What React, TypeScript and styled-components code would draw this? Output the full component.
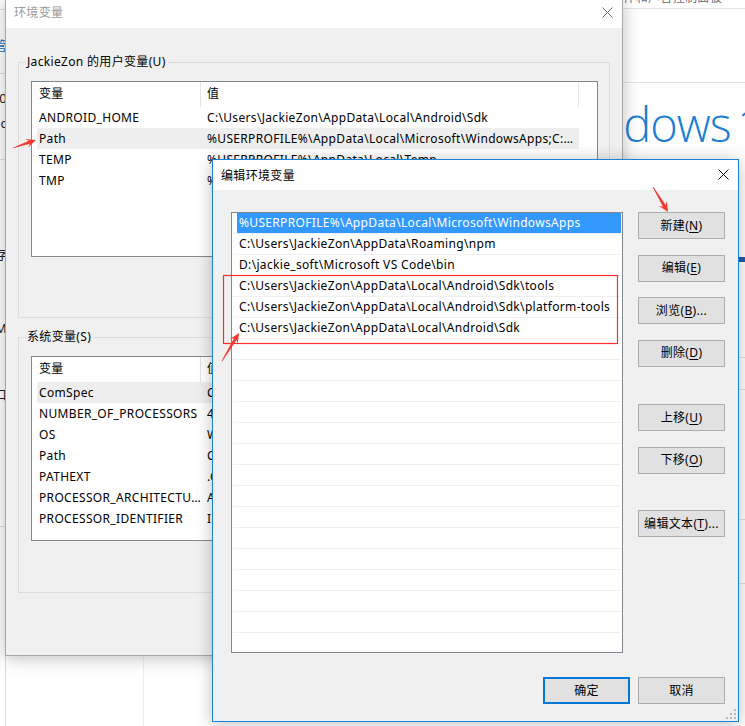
import React from "react";
import styled, { createGlobalStyle } from "styled-components";

const FONT = `"Noto Sans", "Noto Sans CJK SC", sans-serif`;

const GlobalStyle = createGlobalStyle`
  html, body { margin: 0; padding: 0; background: #ffffff; }
  body { overflow: hidden; font-family: ${FONT}; font-size: 12px; color: #000; letter-spacing: 0.33px; }
  * { box-sizing: border-box; }
`;

const Desktop = styled.div`
  position: relative;
  width: 745px;
  height: 726px;
  overflow: hidden;
  background: #ffffff;
`;

/* ---------- background control-panel window ---------- */
const BackWindow = styled.div`
  position: absolute;
  left: 540px;
  top: -16px;
  width: 260px;
  height: 760px;
  background: #ffffff;
  display: flex;
  flex-direction: column;
`;
const Crumb = styled.div`
  height: 25px;
  flex: none;
  padding: 6px 0 0 71px;
  line-height: 16px;
  color: #6d6d6d;
  border-bottom: 1px solid #e3e3e3;
  white-space: nowrap;
`;
const BackSection = styled.div`
  height: 74px;
  flex: none;
  border-bottom: 1px solid #e3e3e3;
`;
const Logo = styled.div`
  margin: 11px 0 0 6px;
  height: 60px;
  flex: none;
  font-family: "Open Sans", "Noto Sans", sans-serif;
  font-weight: 300;
  font-size: 47px;
  line-height: 60px;
  color: #1a7fd4;
  white-space: nowrap;
  letter-spacing: -1px;
  word-spacing: -5px;
`;
const BackRule = styled.div<{ $mt: number }>`
  margin-top: ${(p) => p.$mt}px;
  margin-left: 200px;
  height: 1px;
  flex: none;
  background: #dedede;
`;
const BackBlue = styled.div<{ $mt: number }>`
  margin-top: ${(p) => p.$mt}px;
  margin-left: 199px;
  width: 12px;
  height: 5px;
  flex: none;
  background: #1d5fa5;
`;

const BackNav = styled.div`
  position: absolute;
  left: -44px;
  top: 0;
  width: 50px;
  height: 726px;
  background: #ffffff;
  border-right: 1px solid #dcdcdc;
  display: flex;
  flex-direction: column;
  align-items: flex-end;
`;
const NavRule = styled.div<{ $mt: number }>`
  margin-top: ${(p) => p.$mt}px;
  width: 100%;
  height: 1px;
  flex: none;
  background: #e1e1e1;
`;
const NavGlyph = styled.div<{ $mt: number; $blue?: boolean }>`
  margin-top: ${(p) => p.$mt}px;
  margin-right: -2px;
  height: 16px;
  line-height: 16px;
  flex: none;
  font-size: 13px;
  color: ${(p) => (p.$blue ? "#1a6fc9" : "#222")};
`;
const BackBottom = styled.div`
  position: absolute;
  left: 0;
  top: 640px;
  width: 144px;
  height: 90px;
  border-right: 1px solid #efefef;
`;

/* ---------- windows ---------- */
const Win = styled.div<{
  $x: number;
  $y: number;
  $w: number;
  $h: number;
  $active?: boolean;
}>`
  position: absolute;
  left: ${(p) => p.$x}px;
  top: ${(p) => p.$y}px;
  width: ${(p) => p.$w}px;
  height: ${(p) => p.$h}px;
  display: flex;
  flex-direction: column;
  background: #f0f0f0;
  border: 1px solid ${(p) => (p.$active ? "#1883d7" : "#a8a8a8")};
  box-shadow: 0 2px 16px rgba(0, 0, 0, 0.26);
`;
const TitleBar = styled.div<{ $h: number }>`
  height: ${(p) => p.$h}px;
  flex: none;
  background: #ffffff;
  display: flex;
  align-items: flex-start;
  justify-content: space-between;
`;
const TitleText = styled.div<{ $active?: boolean; $pt: number }>`
  padding: ${(p) => p.$pt}px 0 0 8px;
  line-height: 17px;
  font-size: 12px;
  color: ${(p) => (p.$active ? "#000000" : "#9a9a9a")};
`;
const CloseBtn = styled.div<{ $h: number }>`
  width: 30px;
  height: ${(p) => p.$h}px;
  display: flex;
  align-items: center;
  justify-content: center;
`;

const CloseIcon = ({ color }: { color: string }) => (
  <svg width="11" height="11" viewBox="0 0 11 11">
    <path d="M0.5 0.5 L10.5 10.5 M10.5 0.5 L0.5 10.5" stroke={color} strokeWidth="1" />
  </svg>
);

/* ---------- env vars dialog ---------- */
const EnvBody = styled.div`
  flex: 1;
  display: flex;
  flex-direction: column;
  gap: 11px;
  padding: 26px 12px 0 12px;
`;
const Group = styled.fieldset`
  margin: 0;
  height: 264px;
  padding: 11px 11px 0 12px;
  border: 1px solid #dcdcdc;
  min-inline-size: 0;
`;
const GroupLabel = styled.legend`
  padding: 0 2px;
  margin-left: -6px;
  line-height: 16px;
  font-size: 12px;
  color: #000;
`;
const VarList = styled.div<{ $h: number }>`
  height: ${(p) => p.$h}px;
  background: #ffffff;
  border: 1px solid #828790;
  overflow: hidden;
  display: flex;
  flex-direction: column;
`;
const HeaderRow = styled.div`
  display: flex;
  height: 25px;
  flex: none;
`;
const HeaderCell = styled.div<{ $w: number; $pl: number }>`
  width: ${(p) => p.$w}px;
  flex: none;
  padding-left: ${(p) => p.$pl}px;
  line-height: 24px;
  border-right: 1px solid #e5e5e5;
  white-space: nowrap;
`;
const VarRow = styled.div<{ $sel?: boolean }>`
  display: flex;
  height: 21px;
  flex: none;
  width: 542px;
  margin-left: 5px;
  padding-left: 2px;
  line-height: 21px;
  background: ${(p) => (p.$sel ? "#eeeeee" : "transparent")};
  white-space: nowrap;
`;
const VarName = styled.div`
  width: 164px;
  margin-right: 4px;
  flex: none;
  overflow: hidden;
  text-overflow: ellipsis;
`;
const VarValue = styled.div`
  width: 369px;
  flex: none;
  overflow: hidden;
  text-overflow: ellipsis;
`;

/* ---------- edit dialog ---------- */
const EditBody = styled.div`
  flex: 1;
  display: flex;
  flex-direction: column;
  padding: 22px 13px 0 18px;
`;
const EditMain = styled.div`
  display: flex;
  gap: 15px;
  align-items: flex-start;
`;
const PathList = styled.div`
  width: 392px;
  height: 441px;
  flex: none;
  background: #ffffff;
  border: 1px solid #828790;
  overflow: hidden;
`;
const PathRow = styled.div<{ $sel?: boolean }>`
  height: 21px;
  margin: 0 1px;
  padding-left: 6px;
  line-height: 20px;
  white-space: nowrap;
  border-bottom: 1px solid #f0f0f0;
  color: ${(p) => (p.$sel ? "#ffffff" : "#000000")};
  background: ${(p) =>
    p.$sel ? "linear-gradient(to right, transparent 4px, #3399ff 4px)" : "transparent"};
`;
const BtnColumn = styled.div`
  display: flex;
  flex-direction: column;
  gap: 15.5px;
`;
const Btn = styled.button<{ $default?: boolean; $mt?: number }>`
  width: 87px;
  height: 27px;
  margin: ${(p) => p.$mt ?? 0}px 0 0 0;
  padding: 0;
  background: #e1e1e1;
  border: ${(p) => (p.$default ? "2px solid #0078d7" : "1px solid #adadad")};
  border-radius: 0;
  font-family: ${FONT};
  font-size: 12px;
  letter-spacing: 0.33px;
  line-height: 1;
  color: #000;
  u {
    text-decoration: underline;
    text-underline-offset: 2px;
  }
`;
const Footer = styled.div`
  display: flex;
  justify-content: flex-end;
  gap: 8px;
  margin-top: 24px;
`;
const Grip = styled.svg`
  position: absolute;
  right: 2px;
  bottom: 2px;
`;

/* ---------- annotations ---------- */
const Annotations = styled.svg`
  position: absolute;
  left: 0;
  top: 0;
  pointer-events: none;
`;

function arrowPoints(t: [number, number], h: [number, number]) {
  const dx = h[0] - t[0];
  const dy = h[1] - t[1];
  const L = Math.hypot(dx, dy);
  const ux = dx / L;
  const uy = dy / L;
  const px = -uy;
  const py = ux;
  const pt = (a: number, s: number) =>
    `${(t[0] + ux * a + px * s).toFixed(1)},${(t[1] + uy * a + py * s).toFixed(1)}`;
  return [
    pt(0, 0.3),
    pt(L - 7, 1.6),
    pt(L - 10, 4.6),
    pt(L, 0),
    pt(L - 10, -4.6),
    pt(L - 7, -1.6),
    pt(0, -0.3),
  ].join(" ");
}

const userVars = [
  { name: "ANDROID_HOME", value: "C:\\Users\\JackieZon\\AppData\\Local\\Android\\Sdk" },
  {
    name: "Path",
    value:
      "%USERPROFILE%\\AppData\\Local\\Microsoft\\WindowsApps;C:\\Users\\JackieZon\\AppData\\Roaming\\npm",
    sel: true,
  },
  { name: "TEMP", value: "%USERPROFILE%\\AppData\\Local\\Temp" },
  { name: "TMP", value: "%USERPROFILE%\\AppData\\Local\\Temp" },
];

const sysVars = [
  { name: "ComSpec", value: "C:\\WINDOWS\\system32\\cmd.exe", sel: true },
  { name: "NUMBER_OF_PROCESSORS", value: "4" },
  { name: "OS", value: "Windows_NT" },
  { name: "Path", value: "C:\\ProgramData\\Oracle\\Java\\javapath;C:\\WINDOWS\\system32" },
  { name: "PATHEXT", value: ".COM;.EXE;.BAT;.CMD;.VBS;.VBE;.JS;.JSE;.WSF;.WSH;.MSC" },
  { name: "PROCESSOR_ARCHITECTURE", value: "AMD64" },
  { name: "PROCESSOR_IDENTIFIER", value: "Intel64 Family 6 Model 60 Stepping 3, GenuineIntel" },
];

const paths = [
  "%USERPROFILE%\\AppData\\Local\\Microsoft\\WindowsApps",
  "C:\\Users\\JackieZon\\AppData\\Roaming\\npm",
  "D:\\jackie_soft\\Microsoft VS Code\\bin",
  "C:\\Users\\JackieZon\\AppData\\Local\\Android\\Sdk\\tools",
  "C:\\Users\\JackieZon\\AppData\\Local\\Android\\Sdk\\platform-tools",
  "C:\\Users\\JackieZon\\AppData\\Local\\Android\\Sdk",
];

const VarTable = ({
  h,
  rows,
}: {
  h: number;
  rows: { name: string; value: string; sel?: boolean }[];
}) => (
  <VarList $h={h}>
    <HeaderRow>
      <HeaderCell $w={169} $pl={7}>变量</HeaderCell>
      <HeaderCell $w={378} $pl={6}>值</HeaderCell>
    </HeaderRow>
    {rows.map((r) => (
      <VarRow key={r.name + r.value} $sel={r.sel}>
        <VarName>{r.name}</VarName>
        <VarValue>{r.value}</VarValue>
      </VarRow>
    ))}
  </VarList>
);

export default function App() {
  const rows = Array.from({ length: 21 }, (_, i) => paths[i] ?? "");
  return (
    <>
      <GlobalStyle />
      <Desktop>
        <BackWindow>
          <Crumb>硬件和声音控制面板</Crumb>
          <BackSection />
          <Logo>Windows 10</Logo>
          <BackBlue $mt={103} />
          <BackRule $mt={95} />
          <BackRule $mt={31} />
          <BackRule $mt={129} />
          <BackRule $mt={63} />
        </BackWindow>
        <BackNav>
          <NavRule $mt={9} />
          <NavGlyph $mt={27} $blue>管</NavGlyph>
          <NavRule $mt={20} />
          <NavGlyph $mt={16}>0</NavGlyph>
          <NavGlyph $mt={9}>c</NavGlyph>
          <NavRule $mt={28} />
          <NavGlyph $mt={86}>存</NavGlyph>
          <NavGlyph $mt={58}>M</NavGlyph>
          <NavGlyph $mt={50}>口</NavGlyph>
          <NavRule $mt={124} />
        </BackNav>
        <BackBottom />

        <Win $x={5} $y={-1} $w={618} $h={657}>
          <TitleBar $h={28}>
            <TitleText $pt={4}>环境变量</TitleText>
            <CloseBtn $h={24}>
              <CloseIcon color="#6a6a6a" />
            </CloseBtn>
          </TitleBar>
          <EnvBody>
            <Group>
              <GroupLabel>JackieZon 的用户变量(U)</GroupLabel>
              <VarTable h={176} rows={userVars} />
            </Group>
            <Group>
              <GroupLabel>系统变量(S)</GroupLabel>
              <VarTable h={185} rows={sysVars} />
            </Group>
          </EnvBody>
        </Win>

        <Win $x={212} $y={159} $w={527} $h={563} $active>
          <TitleBar $h={30}>
            <TitleText $active $pt={7}>编辑环境变量</TitleText>
            <CloseBtn $h={28}>
              <CloseIcon color="#111111" />
            </CloseBtn>
          </TitleBar>
          <EditBody>
            <EditMain>
              <PathList>
                {rows.map((p, i) => (
                  <PathRow key={i} $sel={i === 0}>
                    {p || "\u00a0"}
                  </PathRow>
                ))}
              </PathList>
              <BtnColumn>
                <Btn>新建(<u>N</u>)</Btn>
                <Btn>编辑(<u>E</u>)</Btn>
                <Btn>浏览(<u>B</u>)...</Btn>
                <Btn>删除(<u>D</u>)</Btn>
                <Btn $mt={22}>上移(<u>U</u>)</Btn>
                <Btn>下移(<u>O</u>)</Btn>
                <Btn $mt={21}>编辑文本(<u>T</u>)...</Btn>
              </BtnColumn>
            </EditMain>
            <Footer>
              <Btn $default>确定</Btn>
              <Btn>取消</Btn>
            </Footer>
          </EditBody>
          <Grip width="10" height="10" viewBox="0 0 10 10">
            <g fill="#b9b9b9">
              <rect x="8" y="0" width="2" height="2" />
              <rect x="4" y="4" width="2" height="2" />
              <rect x="8" y="4" width="2" height="2" />
              <rect x="0" y="8" width="2" height="2" />
              <rect x="4" y="8" width="2" height="2" />
              <rect x="8" y="8" width="2" height="2" />
            </g>
          </Grip>
        </Win>

        <Annotations width="745" height="726" viewBox="0 0 745 726">
          <rect x="223.5" y="275.5" width="394" height="68" fill="none" stroke="#ff2e2e" strokeWidth="1.2" />
          <polygon points={arrowPoints([13, 148], [36, 140])} fill="#f23a30" />
          <polygon points={arrowPoints([222, 361], [239, 333])} fill="#f23a30" />
          <polygon points={arrowPoints([653, 187], [668, 212])} fill="#f23a30" />
        </Annotations>
      </Desktop>
    </>
  );
}
